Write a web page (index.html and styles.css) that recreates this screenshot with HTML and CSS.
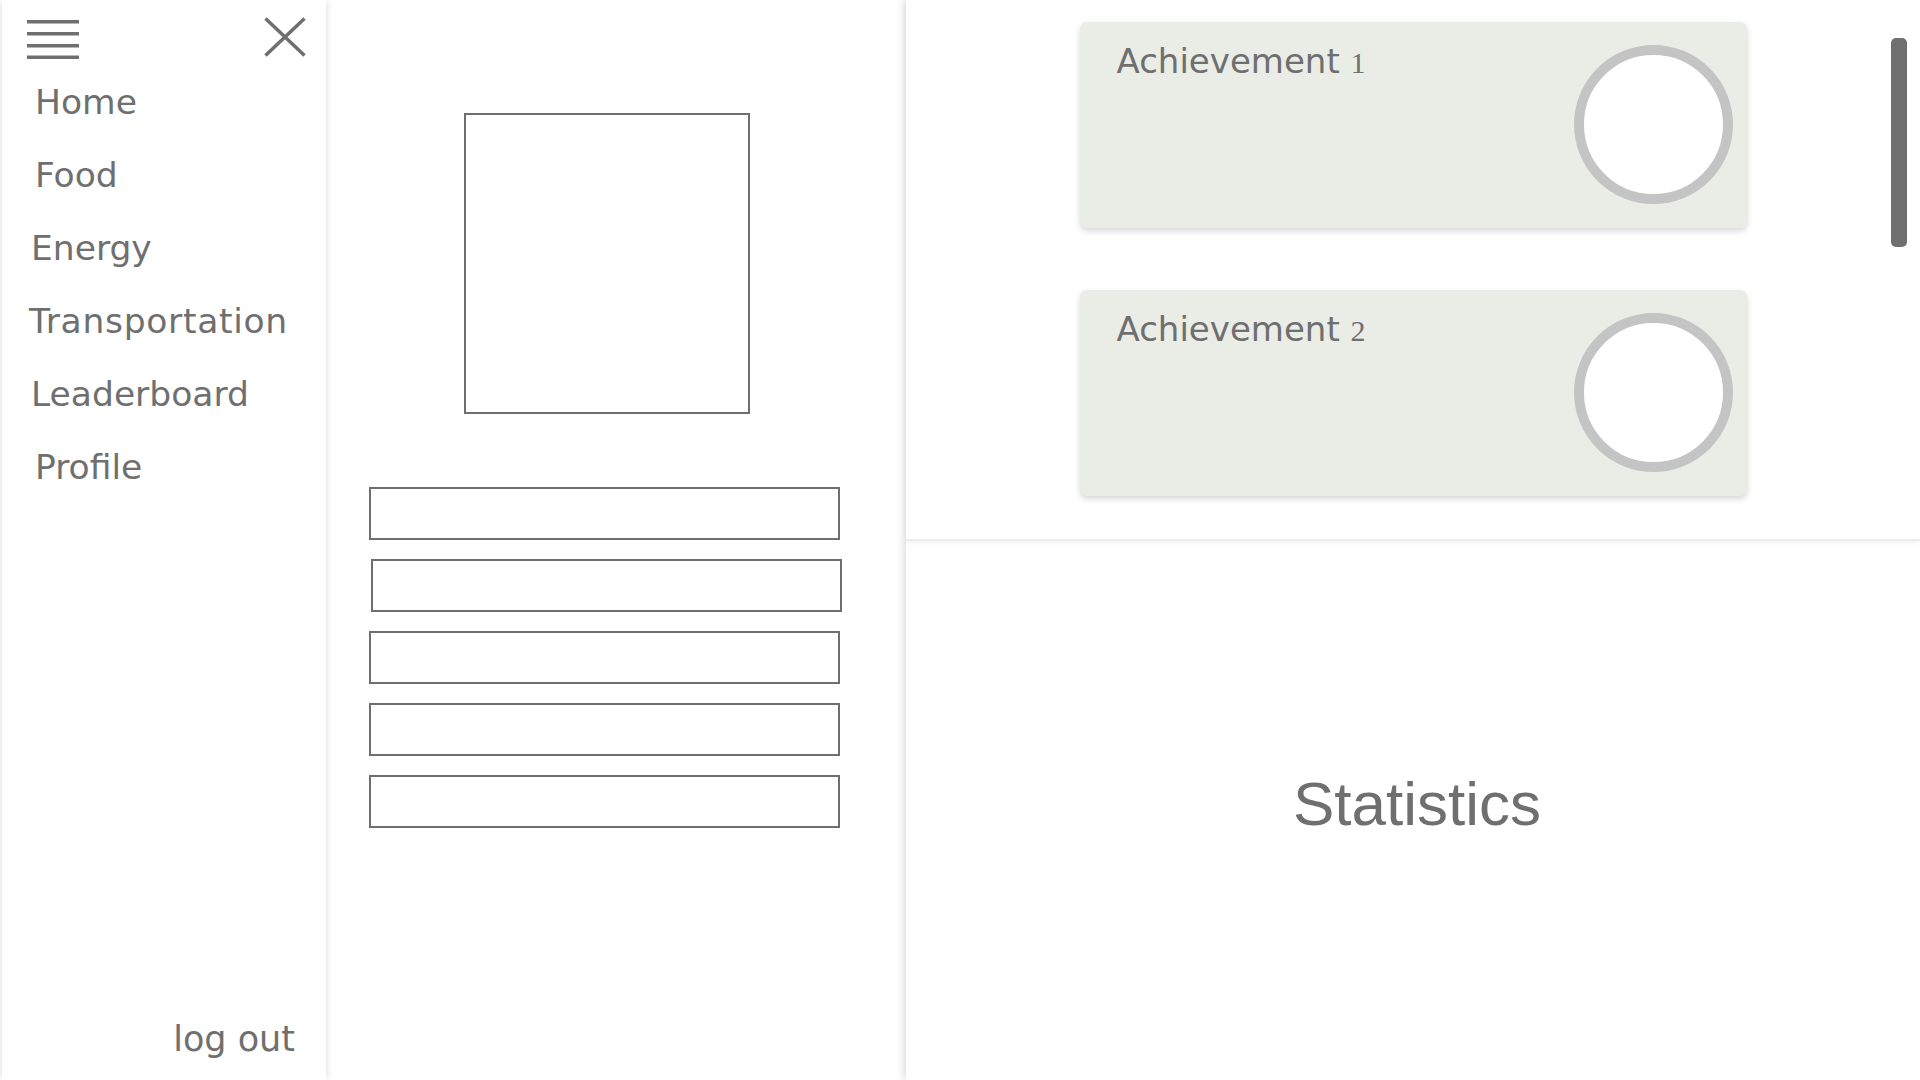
FILE: index.html
```html
<!DOCTYPE html>
<html lang="en">
<head>
<meta charset="utf-8">
<title>Profile</title>
<link rel="stylesheet" href="styles.css">
</head>
<body>
<div class="app">
  <aside class="sidebar">
    <div class="side-head">
      <svg class="burger" width="52" height="40" viewBox="0 0 52 40">
        <rect x="0" y="1" width="52" height="3.5" fill="#6f6f6f"/>
        <rect x="0" y="13" width="52" height="3.5" fill="#6f6f6f"/>
        <rect x="0" y="25" width="52" height="3.5" fill="#6f6f6f"/>
        <rect x="0" y="36.5" width="52" height="3.5" fill="#6f6f6f"/>
      </svg>
      <svg class="close" width="42" height="40" viewBox="0 0 42 40">
        <path d="M1.5 1.5 L40.5 38.5 M40.5 1.5 L1.5 38.5" stroke="#6f6f6f" stroke-width="3.5" fill="none"/>
      </svg>
    </div>
    <nav class="nav">
      <a class="nav-item nav-item--home">Home</a>
      <a class="nav-item nav-item--home">Food</a>
      <a class="nav-item nav-item--left">Energy</a>
      <a class="nav-item nav-item--trans">Transportation</a>
      <a class="nav-item nav-item--left">Leaderboard</a>
      <a class="nav-item nav-item--home">Profile</a>
    </nav>
    <a class="logout">log out</a>
  </aside>

  <main class="middle">
    <div class="avatar"></div>
    <div class="fields">
      <div class="field"></div>
      <div class="field field--shift"></div>
      <div class="field"></div>
      <div class="field"></div>
      <div class="field"></div>
    </div>
  </main>

  <section class="right">
    <div class="achievements">
      <div class="card">
        <div class="card-title">Achievement <span class="num">1</span></div>
        <div class="ring"></div>
      </div>
      <div class="card">
        <div class="card-title">Achievement <span class="num">2</span></div>
        <div class="ring"></div>
      </div>
    </div>
    <div class="stats">Statistics</div>
    <div class="scrollbar"></div>
  </section>
</div>
</body>
</html>
```
FILE: styles.css
```css
* { box-sizing: border-box; }
html, body { margin: 0; padding: 0; background: #ffffff; }
body { width: 1920px; height: 1080px; overflow: hidden; color: #6f6f6f; font-family: "DejaVu Sans", sans-serif; }

.app { display: flex; height: 1080px; }

.sidebar {
  width: 324px;
  margin-left: 2px;
  flex: none;
  display: flex;
  flex-direction: column;
  background: #fff;
  box-shadow: 0 0 7px rgba(0,0,0,0.16);
  position: relative;
  z-index: 2;
}
.side-head {
  display: flex;
  justify-content: space-between;
  align-items: flex-start;
  padding: 18px 20px 0 25px;
  height: 66px;
}
.burger { margin-top: 1px; }
.close { margin-top: -1px; }

.nav { display: flex; flex-direction: column; }
.nav-item {
  height: 73px;
  line-height: 73px;
  font-size: 34.5px;
  padding-left: 32px;
  color: #6f6f6f;
}
.nav-item--home { padding-left: 33px; }
.nav-item--left { padding-left: 29px; }
.nav-item--trans { padding-left: 27px; letter-spacing: 0.7px; }

.logout {
  margin-top: auto;
  align-self: flex-end;
  font-size: 35px;
  height: 73px;
  line-height: 73px;
  padding-right: 31px;
  margin-bottom: 4px;
}

.middle {
  width: 580px;
  flex: none;
  padding: 113px 0 0 43px;
  display: flex;
  flex-direction: column;
  background: #fff;
}
.avatar {
  width: 286px;
  height: 301px;
  margin-left: 95px;
  border: 2px solid #6f6f6f;
}
.fields {
  margin-top: 73px;
  display: flex;
  flex-direction: column;
  gap: 20px;
}
.field {
  width: 471px;
  height: 53px;
  border: 2px solid #6f6f6f;
  margin-bottom: -1px;
}
.field--shift { margin-left: 2px; }

.right {
  flex: 1;
  position: relative;
  background: #fff;
  box-shadow: -3px 0 7px rgba(0,0,0,0.12);
  z-index: 1;
  display: flex;
  flex-direction: column;
}
.achievements {
  height: 541px;
  padding-top: 22px;
  display: flex;
  flex-direction: column;
  align-items: center;
  gap: 62px;
  border-bottom: 2px solid #ececec;
  box-shadow: 0 2px 4px rgba(0,0,0,0.05);
}
.card {
  width: 667px;
  height: 206px;
  background: #eaece6;
  border-radius: 7px;
  box-shadow: 0 3px 6px rgba(0,0,0,0.16);
  display: flex;
  justify-content: space-between;
  align-items: center;
  padding: 0 14px 0 37px;
}
.card-title {
  align-self: flex-start;
  padding-top: 19px;
  font-size: 34px;
  line-height: 41px;
}
.num {
  font-family: "Liberation Serif", serif;
  font-size: 30px;
}
.ring {
  width: 159px;
  height: 159px;
  border-radius: 50%;
  border: 10px solid #c4c4c4;
  background: #fff;
  margin-top: -2px;
}
.stats {
  flex: 1;
  display: flex;
  align-items: center;
  justify-content: center;
  font-family: "Liberation Sans", Arial, sans-serif;
  font-size: 62px;
  padding-bottom: 14px;
  padding-left: 8px;
}
.scrollbar {
  position: absolute;
  left: 985px;
  top: 38px;
  width: 16px;
  height: 209px;
  border-radius: 5px;
  background: #6f6f6f;
}
```
